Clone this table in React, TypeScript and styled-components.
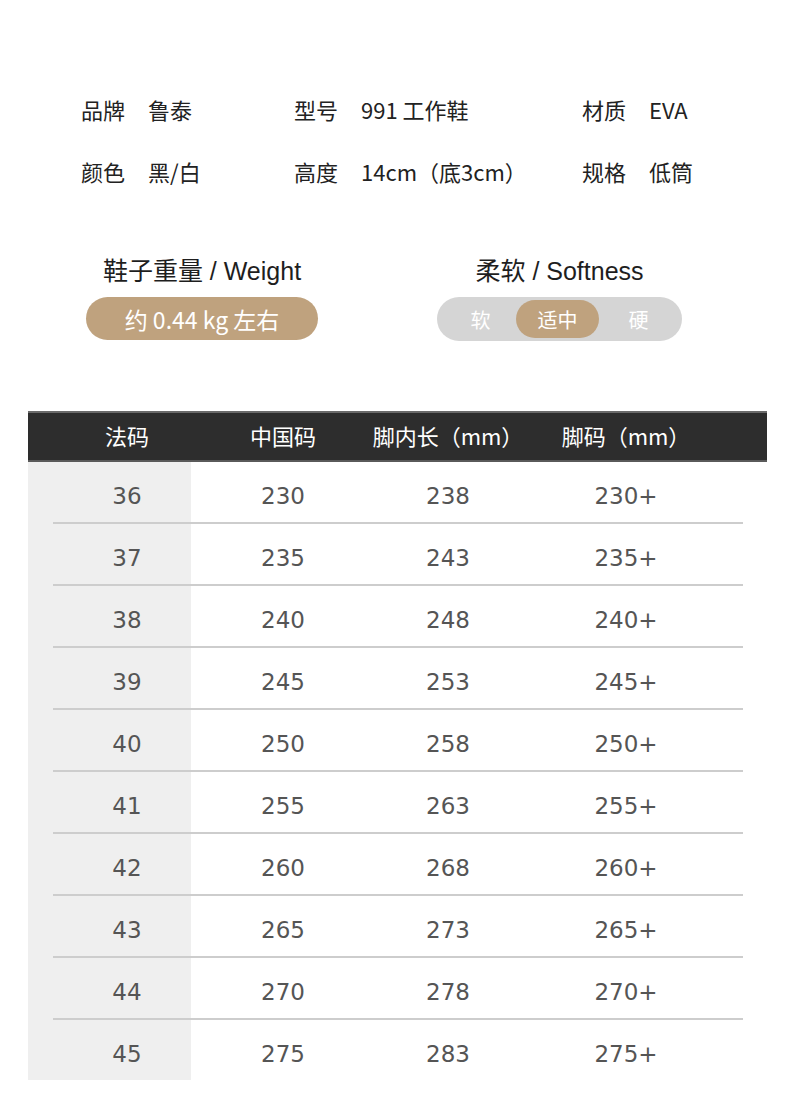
import React from 'react';
import styled, { createGlobalStyle } from 'styled-components';

const GlobalStyle = createGlobalStyle`
  body {
    margin: 0;
    background: #ffffff;
    font-family: "Noto Sans CJK SC", "Noto Sans", sans-serif;
  }
`;

const specs = [
  [
    { label: '品牌', value: '鲁泰' },
    { label: '型号', value: '991 工作鞋' },
    { label: '材质', value: 'EVA' },
  ],
  [
    { label: '颜色', value: '黑/白' },
    { label: '高度', value: '14cm（底3cm）' },
    { label: '规格', value: '低筒' },
  ],
];

const sizes = [
  ['36', '230', '238', '230+'],
  ['37', '235', '243', '235+'],
  ['38', '240', '248', '240+'],
  ['39', '245', '253', '245+'],
  ['40', '250', '258', '250+'],
  ['41', '255', '263', '255+'],
  ['42', '260', '268', '260+'],
  ['43', '265', '273', '265+'],
  ['44', '270', '278', '270+'],
  ['45', '275', '283', '275+'],
];

const softness = ['软', '适中', '硬'];

export default function App() {
  return (
    <Page>
      <GlobalStyle />
      <SpecGrid>
        {specs.map((row, i) =>
          row.map((item) => (
            <SpecItem key={i + item.label}>
              <span>{item.label}</span>
              <SpecValue>{item.value}</SpecValue>
            </SpecItem>
          ))
        )}
      </SpecGrid>

      <Meters>
        <Meter width={232}>
          <MeterTitle>鞋子重量 / Weight</MeterTitle>
          <WeightPill>约 0.44 kg 左右</WeightPill>
        </Meter>
        <Meter width={245}>
          <MeterTitle>柔软 / Softness</MeterTitle>
          <Track>
            {softness.map((s) => (
              <TrackOption key={s} active={s === '适中'}>
                {s}
              </TrackOption>
            ))}
          </Track>
        </Meter>
      </Meters>

      <Table>
        <HeadRow>
          <HeadCell>法码</HeadCell>
          <HeadCell>中国码</HeadCell>
          <HeadCell>脚内长（mm）</HeadCell>
          <HeadCell>脚码（mm）</HeadCell>
        </HeadRow>
        <Body>
          {sizes.map((r, i) => (
            <Row key={r[0]} last={i === sizes.length - 1}>
              {r.map((c, j) => (
                <Cell key={j}>{c}</Cell>
              ))}
            </Row>
          ))}
        </Body>
      </Table>
    </Page>
  );
}

const Page = styled.div`
  width: 790px;
  height: 1115px;
  overflow: hidden;
  background: #ffffff;
`;

const SpecGrid = styled.div`
  display: grid;
  grid-template-columns: 213px 288px auto;
  row-gap: 32px;
  padding: 94px 0 0 81px;
`;

const SpecItem = styled.div`
  display: flex;
  align-items: center;
  gap: 23px;
  font-size: 22px;
  line-height: 30px;
  color: #222222;
`;

const SpecValue = styled.span`
  white-space: nowrap;
`;

const Meters = styled.div`
  display: flex;
  gap: 119px;
  padding: 70px 0 0 86px;
`;

const Meter = styled.div<{ width: number }>`
  width: ${({ width }) => width}px;
  display: flex;
  flex-direction: column;
  align-items: center;
`;

const MeterTitle = styled.div`
  font-family: "Liberation Sans", "Noto Sans CJK SC", sans-serif;
  font-size: 25px;
  line-height: 30px;
  color: #1e1e1e;
  margin-bottom: 11px;
  white-space: nowrap;
`;

const WeightPill = styled.div`
  width: 100%;
  height: 43px;
  border-radius: 22px;
  background: #bfa27e;
  color: #ffffff;
  font-size: 23px;
  display: flex;
  align-items: center;
  justify-content: center;
`;

const Track = styled.div`
  width: 100%;
  height: 44px;
  border-radius: 22px;
  background: #d5d5d5;
  display: grid;
  grid-template-columns: 79px 83px 83px;
  align-items: center;
`;

const TrackOption = styled.div<{ active?: boolean }>`
  height: 38px;
  border-radius: 19px;
  background: ${({ active }) => (active ? '#bfa27e' : 'transparent')};
  color: #ffffff;
  font-size: 20px;
  display: flex;
  align-items: center;
  justify-content: center;

  &:first-child {
    padding-left: 8px;
  }
  &:last-child {
    padding-right: 4px;
  }
`;

const Table = styled.div`
  margin: 70px 0 0 28px;
  width: 739px;
`;

const columns = '198px 114px 216px 140px 1fr';

const HeadRow = styled.div`
  display: grid;
  grid-template-columns: ${columns};
  height: 47px;
  background: #2d2d2d;
  border-top: 2px solid #6a6a6a;
  border-bottom: 2px solid #5a5a5a;
  align-items: center;
`;

const HeadCell = styled.div`
  color: #ffffff;
  font-size: 22px;
  text-align: center;
  white-space: nowrap;
  padding-bottom: 4px;
`;

const Body = styled.div`
  background: linear-gradient(to right, #efefef 163px, #ffffff 163px);
  height: 618px;
`;

const Row = styled.div<{ last?: boolean }>`
  position: relative;
  display: grid;
  grid-template-columns: ${columns};
  height: 62px;
  align-items: center;

  &::after {
    content: '';
    display: ${({ last }) => (last ? 'none' : 'block')};
    position: absolute;
    left: 25px;
    width: 690px;
    bottom: 0;
    height: 2px;
    background: #cdcdcd;
  }
`;

const Cell = styled.div`
  text-align: center;
  font-family: "DejaVu Sans", "Noto Sans", sans-serif;
  font-size: 23px;
  color: #555555;
  padding-top: 6px;
`;
